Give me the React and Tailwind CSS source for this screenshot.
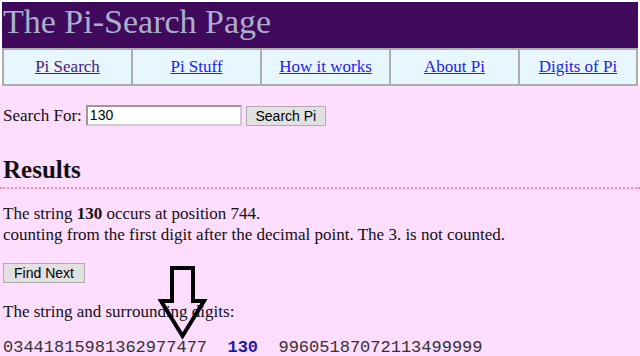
import React from 'react';

const navLinks = [
  { label: 'Pi Search', visited: true },
  { label: 'Pi Stuff' },
  { label: 'How it works' },
  { label: 'About Pi' },
  { label: 'Digits of Pi' },
];

// outline arrow pointing at the match
const DownArrow = () => (
  <svg className="absolute left-[158px] top-[264px]" width="50" height="78" viewBox="158 264 50 78">
    <polygon
      points="172,268 193,268 193,301 204,301 182.5,336 161,301 172,301"
      fill="none"
      stroke="#000"
      strokeWidth="4"
      strokeLinejoin="miter"
    />
  </svg>
);

export default function App() {
  return (
    <div className="relative min-h-screen bg-[#ffddff] font-['Liberation_Serif',serif] text-[17px] text-[#111]">
      <div className="bg-white pt-[2px] px-[2px]">
        <div className="h-[46px] bg-[#400a5c] px-[1px] text-[34px] leading-[40px] text-[#aab0cc]">
          The Pi-Search Page
        </div>
        <div className="grid grid-cols-[129px_129px_129px_129px_1fr] border-y-2 border-[#adadad] bg-[#e8f6ff]">
          {navLinks.map((l, i) => (
            <div
              key={l.label}
              className={`flex h-[34px] items-center justify-center border-l-2 border-[#adadad] ${i === navLinks.length - 1 ? 'border-r-2' : ''}`}
            >
              <a href="#" className={`underline ${l.visited ? 'text-[#4a1a7e]' : 'text-[#2222ee]'}`}>
                {l.label}
              </a>
            </div>
          ))}
        </div>
      </div>

      <div className="pl-[3px]">
        <div className="mt-[17px] flex items-center">
          <span>Search For:</span>
          <input
            defaultValue="130"
            className="ml-[4px] h-[21px] w-[156px] border-2 border-t-[#999] border-l-[#999] border-r-[#ccc] border-b-[#ccc] bg-white px-[2px] font-['Liberation_Sans',sans-serif] text-[14px] text-black outline-none"
          />
          <button className="ml-[4px] h-[20px] w-[80px] border border-[#adadad] bg-[#e1e1e1] font-['Liberation_Sans',sans-serif] text-[14px] leading-none text-black">
            Search Pi
          </button>
        </div>

        <h2 className="mt-[26px] text-[25px] font-bold leading-[30px]">Results</h2>
      </div>
      <div className="mt-[2px] border-b-2 border-dotted border-[#f88aa6]" />

      <div className="pl-[3px]">
        <p className="mt-[14px] leading-[21px]">
          The string <b>130</b> occurs at position 744.
          <br />
          counting from the first digit after the decimal point. The 3. is not counted.
        </p>

        <button className="mt-[18px] h-[20px] w-[82px] border border-[#adadad] bg-[#e1e1e1] font-['Liberation_Sans',sans-serif] text-[14px] leading-none text-black">
          Find Next
        </button>

        <p className="mt-[16px] leading-[21px]">The string and surrounding digits:</p>

        <p className="mt-[15px] whitespace-pre font-['Liberation_Mono',monospace] text-[17px] leading-[21px] text-[#333]">
          03441815981362977477{'  '}
          <b className="text-[#1c1ca8]">130</b>
          {'  '}99605187072113499999
        </p>
      </div>

      <DownArrow />
    </div>
  );
}
